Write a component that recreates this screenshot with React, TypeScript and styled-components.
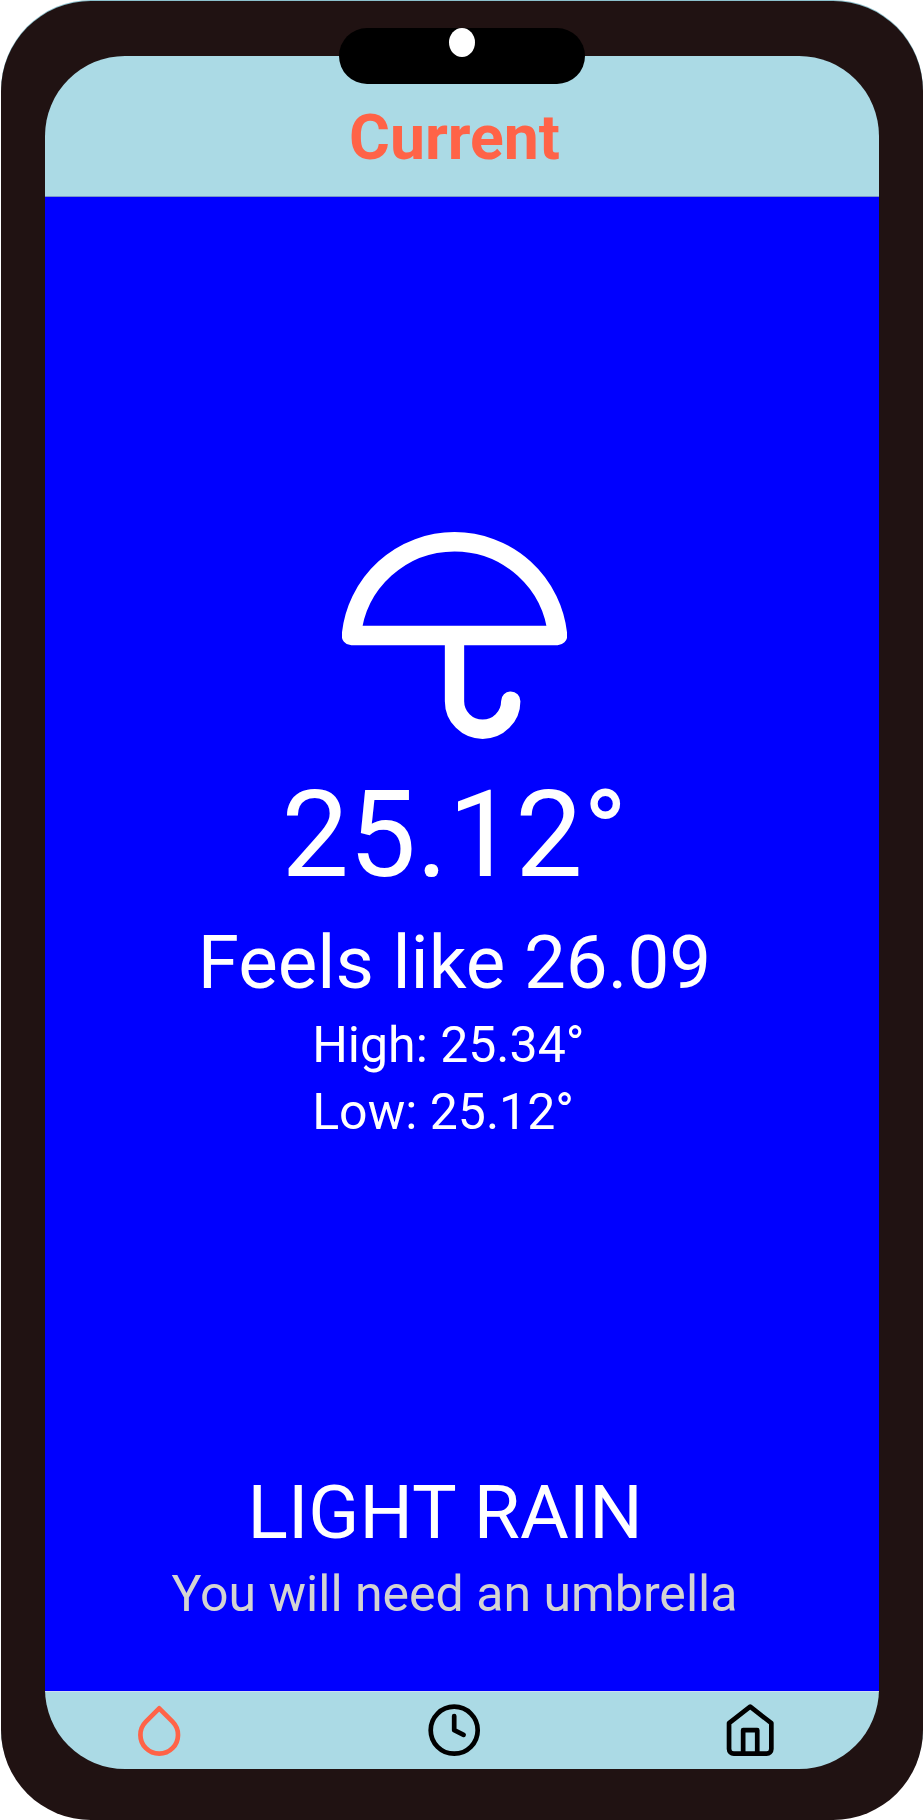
import React from "react";
import styled, { createGlobalStyle } from "styled-components";
import { FiClock, FiDroplet, FiHome, FiUmbrella } from "react-icons/fi";

const GlobalStyle = createGlobalStyle`
  *, *::before, *::after { box-sizing: border-box; }
  body { margin: 0; background: #fff; font-family: Roboto, "Liberation Sans", sans-serif; }
`;

const Phone = styled.div`
  position: relative;
  width: 922px;
  height: 1819px;
  margin: 1px 1px 0;
  padding: 55px 44px 50px;
  background: #201212;
  border-radius: 90px;
  box-shadow: 0 -1px 0 #8cc0cc;
`;

const Notch = styled.div`
  position: absolute;
  top: 27px;
  left: 338px;
  width: 246.4px;
  height: 56.2px;
  border-radius: 28px;
  background: #000;
`;

const Camera = styled.div`
  width: 26px;
  height: 29px;
  margin: 0 auto;
  border-radius: 50%;
  background: #fff;
`;

const Screen = styled.div`
  width: 834px;
  height: 1713px;
  border-radius: 80px;
  overflow: hidden;
`;

/* The app is slightly wider than the visible glass and runs under the bezel. */
const AppView = styled.div`
  display: flex;
  flex-direction: column;
  width: 886px;
  height: 100%;
  margin-left: -33.5px;
`;

const Header = styled.header`
  height: 141px;
  padding: 45px 0 0;
  background: #abdae5;
  border-bottom: 1px solid #7c96cc;
  text-align: center;
`;

const Title = styled.h1`
  margin: 0;
  color: tomato;
  font-size: 62.5px;
  font-weight: 700;
  line-height: 74px;
`;

const Weather = styled.main`
  flex: 1;
  display: flex;
  flex-direction: column;
  justify-content: space-between;
  padding: 325.6px 0 67.5px;
  background: #0000ff;
  color: #fff;
`;

const Group = styled.section`
  display: flex;
  flex-direction: column;
  align-items: center;
`;

const Line = styled.div<{ $size: number; $leading: number; $gap?: number; $color?: string }>`
  margin-top: ${(p) => p.$gap ?? 0}px;
  color: ${(p) => p.$color ?? "inherit"};
  font-size: ${(p) => p.$size}px;
  line-height: ${(p) => p.$leading}px;
  white-space: pre;
`;

const HighLow = styled.div`
  margin-top: 5px;
`;

const TabBar = styled.nav`
  display: grid;
  grid-template-columns: repeat(3, 1fr);
  align-items: center;
  justify-items: center;
  height: 78px;
  background: #abdae5;
  border-top: 1px solid #cfd8f6;
`;

const Tab = styled.div<{ $active?: boolean }>`
  display: flex;
  color: ${(p) => (p.$active ? "tomato" : "#000")};
`;

export default function App() {
  return (
    <>
      <GlobalStyle />
      <Phone>
        <Screen>
          <AppView>
            <Header>
              <Title>Current</Title>
            </Header>
            <Weather>
              <Group>
                <FiUmbrella size={225} strokeWidth={2.06} />
                <Line $size={120} $leading={140} $gap={17.4}>25.12°</Line>
                <Line $size={74.6} $leading={88} $gap={14}>Feels like 26.09</Line>
                <HighLow>
                  <Line $size={50} $leading={67}>{"High: 25.34° "}</Line>
                  <Line $size={50} $leading={67}>{"Low: 25.12°"}</Line>
                </HighLow>
              </Group>
              <Group>
                <Line $size={75} $leading={88}>{"LIGHT RAIN "}</Line>
                <Line $size={50} $leading={60} $gap={8} $color="lightgray">You will need an umbrella</Line>
              </Group>
            </Weather>
            <TabBar>
              <Tab $active><FiDroplet size={56.4} /></Tab>
              <Tab><FiClock size={56.4} /></Tab>
              <Tab><FiHome size={56.4} /></Tab>
            </TabBar>
          </AppView>
        </Screen>
        <Notch>
          <Camera />
        </Notch>
      </Phone>
    </>
  );
}
